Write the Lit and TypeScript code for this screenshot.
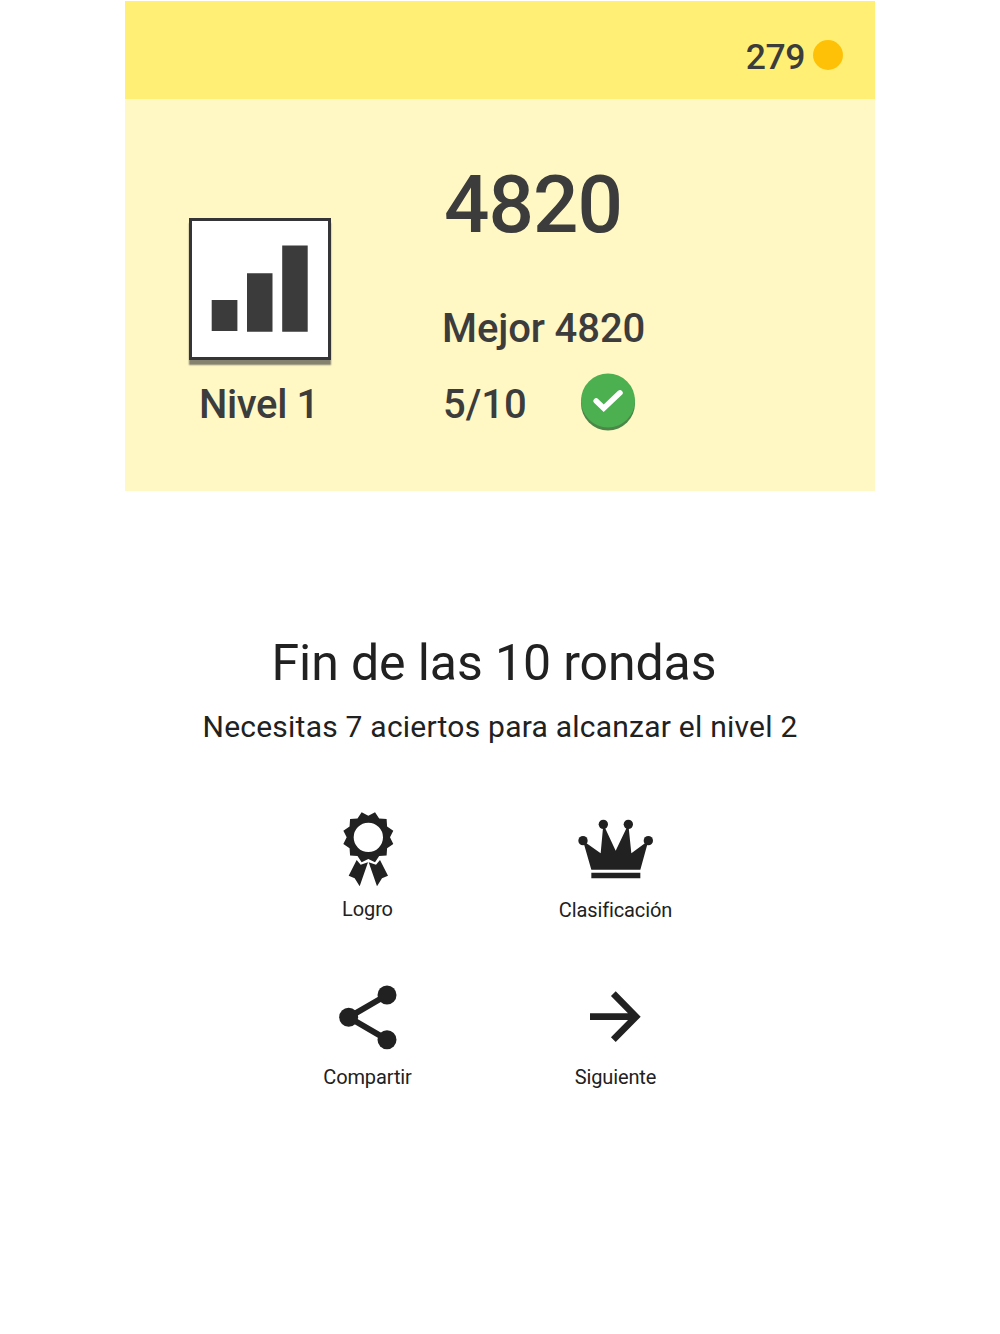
import { LitElement, html, css, svg } from "lit";
import { customElement, property } from "lit/decorators.js";

const burst = Array.from({ length: 24 }, (_, i) => {
  const a = (i * Math.PI) / 12;
  const r = i % 2 ? 77.5 : 65;
  return `${(145 + r * Math.sin(a)).toFixed(1)},${(112 - r * Math.cos(a)).toFixed(1)}`;
}).join("L");

const icons: Record<string, { box: string; w: number; h: number; art: unknown }> = {
  medal: {
    box: "57 30 171 240", w: 57, h: 80,
    art: svg`
      <path fill-rule="evenodd" d="M${burst}ZM145 68a44 44 0 1 0 0 88a44 44 0 1 0 0-88Z"/>
      <path d="M110 180L122 194L144 187L119 259L104 235L86 227ZM146 187L168 194L180 180L204 227L186 235L171 259Z"/>`,
  },
  crown: {
    box: "78 30 240 240", w: 80, h: 80,
    art: svg`
      <path d="M99 122L152 160L160 73L197 152L235 73L244 160L295 122L271 209H124Z"/>
      <circle cx="99" cy="122" r="14"/><circle cx="160" cy="73" r="14"/>
      <circle cx="235" cy="73" r="14"/><circle cx="295" cy="122" r="14"/>
      <path d="M124 218H271V235H124Z"/>`,
  },
  share: {
    box: "81 30 186 240", w: 62, h: 80,
    art: svg`
      <path d="M231 75L116 142L231 209" fill="none" stroke="currentColor" stroke-width="18"/>
      <circle cx="231" cy="75" r="28.5"/><circle cx="116" cy="142" r="28.5"/><circle cx="231" cy="209" r="28.5"/>`,
  },
  next: {
    box: "78 30 180 240", w: 60, h: 80,
    art: svg`<path d="M90 140H230M160 71L228 140L160 209" fill="none" stroke="currentColor" stroke-width="20"/>`,
  },
};

@customElement("action-button")
class ActionButton extends LitElement {
  @property() icon = "medal";
  @property() label = "";
  static styles = css`
    :host { display: flex; flex-direction: column; align-items: center; color: #212121; }
    svg { display: block; fill: currentColor; }
    .label { font-size: 20px; line-height: 24px; white-space: nowrap; letter-spacing: -0.12px; margin-top: var(--gap, 7px); }
  `;
  render() {
    const i = icons[this.icon];
    return html`<svg width=${i.w} height=${i.h} viewBox=${i.box}>${i.art}</svg>
      <span class="label">${this.label}</span>`;
  }
}

@customElement("app-root")
class AppRoot extends LitElement {
  static styles = css`
    :host { display: block; height: 1334px; background: #fff; font-family: Roboto, "Liberation Sans", sans-serif; color: #3c3c3c; overflow: hidden; }
    .screen { width: 750px; margin: 0 auto; padding-top: 1px; }
    .top { height: 98px; background: #fff075; display: flex; align-items: center; justify-content: flex-end; gap: 8px; padding: 10px 32px 0 0; box-sizing: border-box; }
    .coins { font-size: 35.5px; line-height: 40px; font-weight: 500; letter-spacing: -0.4px; padding-top: 3px; }
    .coin { width: 30px; height: 30px; border-radius: 50%; background: #ffc107; }
    .card { height: 392px; box-sizing: border-box; background: #fff8c5; display: flex; padding-left: 64px; font-weight: 500; font-size: 40px; line-height: 48px; white-space: nowrap; }
    .level { width: 142px; padding-top: 119px; display: flex; flex-direction: column; align-items: center; }
    .tile { width: 142px; height: 142px; box-sizing: border-box; border: 3.5px solid #353537; background: #fff; box-shadow: 0 5px 1.5px #858270; }
    .tile svg { display: block; fill: #3b3b3b; }
    .level-name { margin-top: 21px; letter-spacing: -0.35px; padding-right: 2px; }
    .score { margin-left: 112px; padding-top: 60px; }
    .points { font-size: 80px; line-height: 92px; letter-spacing: -1px; padding-left: 1px; }
    .best { margin-top: 54px; letter-spacing: -0.1px; margin-left: -1px; }
    .hits { display: flex; align-items: flex-start; margin-top: 19px; }
    .ratio { width: 137px; padding-top: 9px; }
    .check { display: block; }
    h1 { margin: 142px 12px 0 0; text-align: center; font-size: 50px; line-height: 60px; font-weight: 400; letter-spacing: -0.1px; color: #212121; white-space: nowrap; }
    p { margin: 16px 0 0; text-align: center; font-size: 30px; line-height: 36px; letter-spacing: 0.23px; color: #212121; white-space: nowrap; }
    .actions { display: grid; grid-template-columns: 248px 248px; justify-content: center; margin-top: 65px; padding-right: 17px; }
    .row2 { margin-top: 58px; --gap: 5px; }
    .low { --gap: 8px; }
  `;
  render() {
    return html`<div class="screen">
      <header class="top"><span class="coins">279</span><span class="coin"></span></header>
      <section class="card">
        <div class="level">
          <div class="tile">
            <svg width="135" height="135" viewBox="0 0 135 135">
              <path d="M19.7 79H45.4V110H19.7ZM55 52.3H80.5V110.7H55ZM90.2 24.5H115.7V110.7H90.2Z"/>
            </svg>
          </div>
          <span class="level-name">Nivel 1</span>
        </div>
        <div class="score">
          <div class="points">4820</div>
          <div class="best">Mejor 4820</div>
          <div class="hits">
            <span class="ratio">5/10</span>
            <svg class="check" width="56" height="60" viewBox="0 0 56 60">
              <circle cx="28" cy="31.5" r="27" fill="#4b8748"/>
              <circle cx="28" cy="28.5" r="27" fill="#4caf50"/>
              <path d="M16.2 29L23.7 36.3L40 20.8" fill="none" stroke="#fff" stroke-width="5.5" stroke-linecap="round" stroke-linejoin="miter"/>
            </svg>
          </div>
        </div>
      </section>
      <h1>Fin de las 10 rondas</h1>
      <p>Necesitas 7 aciertos para alcanzar el nivel 2</p>
      <div class="actions">
        <action-button icon="medal" label="Logro"></action-button>
        <action-button class="low" icon="crown" label="Clasificación"></action-button>
        <action-button class="row2" icon="share" label="Compartir"></action-button>
        <action-button class="row2" icon="next" label="Siguiente"></action-button>
      </div>
    </div>`;
  }
}
